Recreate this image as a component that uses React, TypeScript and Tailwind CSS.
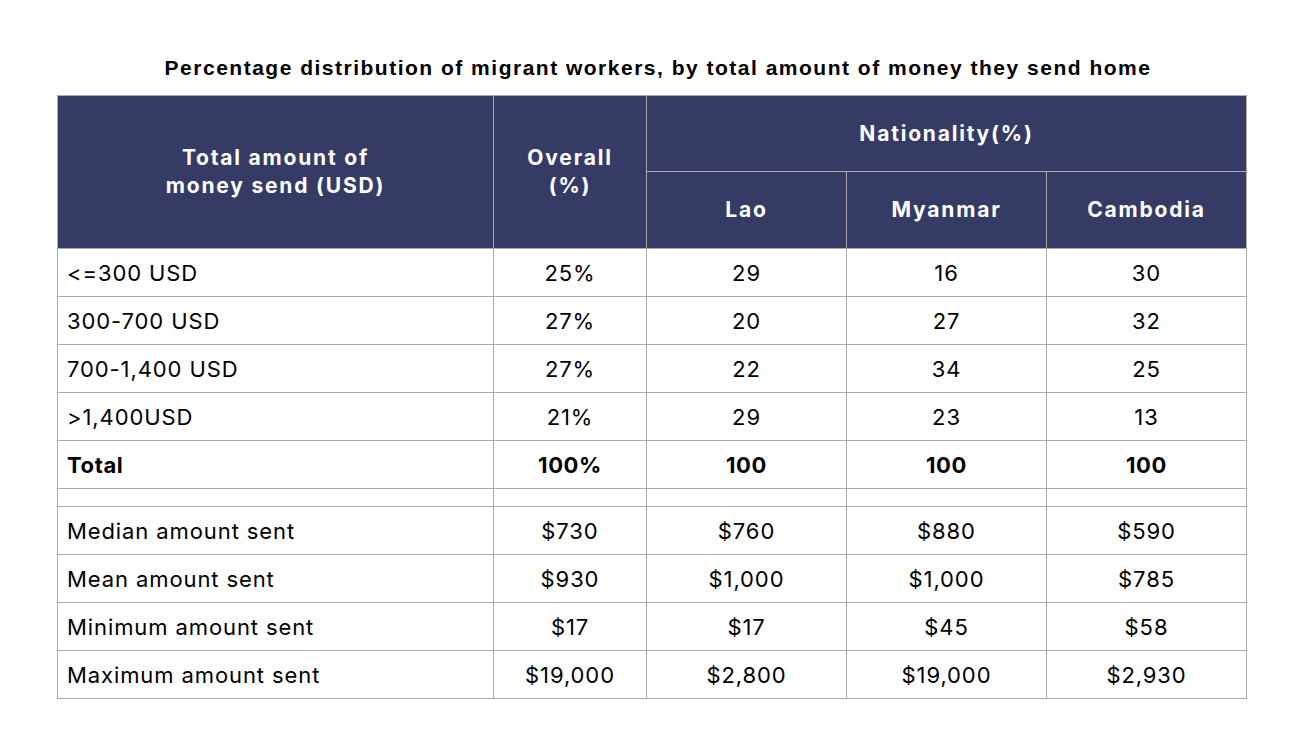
const rows: [string, string, string, string, string][] = [
  ['<=300 USD', '25%', '29', '16', '30'],
  ['300-700 USD', '27%', '20', '27', '32'],
  ['700-1,400 USD', '27%', '22', '34', '25'],
  ['>1,400USD', '21%', '29', '23', '13'],
];

const stats: [string, string, string, string, string][] = [
  ['Median amount sent', '$730', '$760', '$880', '$590'],
  ['Mean amount sent', '$930', '$1,000', '$1,000', '$785'],
  ['Minimum amount sent', '$17', '$17', '$45', '$58'],
  ['Maximum amount sent', '$19,000', '$2,800', '$19,000', '$2,930'],
];

const cell = 'border border-[#aaaaaa] h-[48px] p-0 pt-[2px]';

function DataRow({ r, bold }: { r: string[]; bold?: boolean }) {
  return (
    <tr className={bold ? 'font-bold tracking-[0.6px]' : ''}>
      <td className={`${cell} pl-[9px] text-left`}>{r[0]}</td>
      {r.slice(1).map((v, i) => (
        <td key={i} className={`${cell} text-center`}>{v}</td>
      ))}
    </tr>
  );
}

export default function App() {
  return (
    <div className="w-[1316px] h-[737px] bg-white text-black font-['Inter',sans-serif]">
      <h1 className="pt-[55px] h-[95px] text-center font-['Liberation_Sans',Arial,sans-serif] text-[21px] font-bold leading-[26px] tracking-[1.5px]">
        Percentage distribution of migrant workers, by total amount of money they send home
      </h1>
      <table className="ml-[57px] w-[1190px] border-collapse table-fixed text-[22px] tracking-[0.9px]">
        <colgroup>
          <col className="w-[436px]" />
          <col className="w-[153px]" />
          <col className="w-[200px]" />
          <col className="w-[200px]" />
          <col className="w-[200px]" />
        </colgroup>
        <thead className="bg-[#363b66] text-white font-bold text-[21px] leading-[28px] tracking-[1.8px]">
          <tr>
            <th rowSpan={2} className="border border-[#aaaaaa] h-[153px] font-bold">
              Total amount of
              <br />
              money send (USD)
            </th>
            <th rowSpan={2} className="border border-[#aaaaaa] font-bold">
              Overall
              <br />
              (%)
            </th>
            <th colSpan={3} className="border border-[#aaaaaa] h-[76px] font-bold">
              Nationality(%)
            </th>
          </tr>
          <tr>
            <th className="border border-[#aaaaaa] h-[77px] font-bold">Lao</th>
            <th className="border border-[#aaaaaa] font-bold">Myanmar</th>
            <th className="border border-[#aaaaaa] font-bold">Cambodia</th>
          </tr>
        </thead>
        <tbody>
          {rows.map((r, i) => (
            <DataRow key={i} r={r} />
          ))}
          <DataRow r={['Total', '100%', '100', '100', '100']} bold />
          <tr>
            {[0, 1, 2, 3, 4].map((i) => (
              <td key={i} className="border border-[#aaaaaa] h-[18px] p-0" />
            ))}
          </tr>
          {stats.map((r, i) => (
            <DataRow key={i} r={r} />
          ))}
        </tbody>
      </table>
    </div>
  );
}
